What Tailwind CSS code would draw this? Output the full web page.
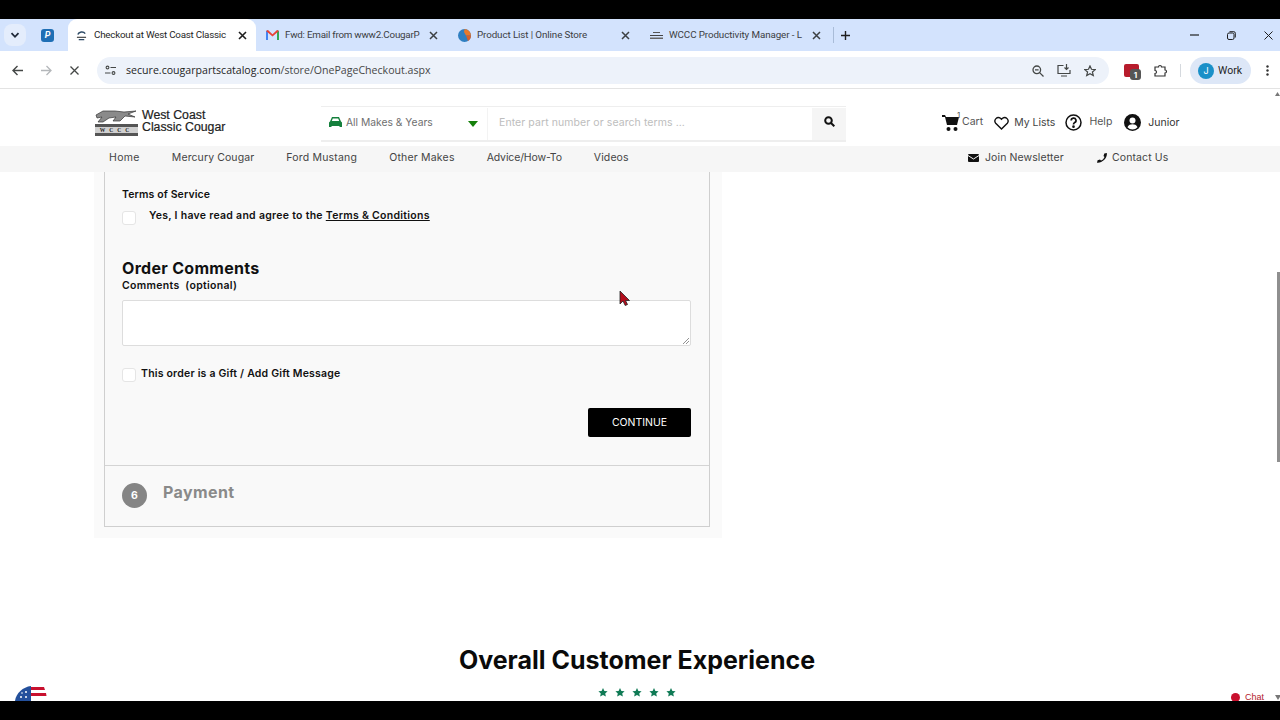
<!DOCTYPE html>
<html lang="en">
<head>
<meta charset="utf-8">
<title>Checkout at West Coast Classic Cougar</title>
<script src="https://cdn.jsdelivr.net/npm/@tailwindcss/browser@4"></script>
</head>
<body class="bg-black">
<div class="relative w-[1280px] h-[720px] overflow-hidden bg-black flex flex-col font-['Inter',sans-serif]">
  <div class="h-[19px] shrink-0 bg-black"></div>

  <!-- tab strip -->
  <div class="h-[32px] shrink-0 bg-[#d3e3fd] flex items-stretch text-[9.8px] tracking-[-0.1px] text-[#3c4043] font-['Roboto',sans-serif]">
    <div class="w-[30px] shrink-0 flex items-center justify-center">
      <div class="w-[22px] h-[22px] rounded-[8px] bg-[#e4edfc] flex items-center justify-center">
        <svg width="10" height="10" viewBox="0 0 10 10" fill="none" stroke="#1f2937" stroke-width="1.8"><path d="M1.5 3.2 5 6.8l3.5-3.6"/></svg>
      </div>
    </div>
    <div class="w-[38px] shrink-0 flex items-center pl-[11px]">
      <div class="w-[13px] h-[13px] rounded-[3px] bg-[#1f6fb5] text-white text-[9px] font-bold italic flex items-center justify-center leading-none">P</div>
    </div>
    <div class="w-[188px] shrink-0 bg-white rounded-t-[9px] flex items-center pl-[8px] text-[#1f1f1f]">
      <svg class="shrink-0" width="11" height="11" viewBox="0 0 12 12" fill="none"><path d="M2 5c1-3 6-4 8-1" stroke="#2d4a66" stroke-width="1.6"/><path d="M1 8h10" stroke="#555" stroke-width="1.4"/><path d="M3 10.5h6" stroke="#2d4a66" stroke-width="1.4"/></svg>
      <span class="ml-[7px] w-[136px] shrink-0 whitespace-nowrap tracking-[-0.23px] pt-px">Checkout at West Coast Classic</span>
      <svg class="ml-[8px] shrink-0" width="9" height="9" viewBox="0 0 9 9" stroke="#1f1f1f" stroke-width="1.6"><path d="M1 1l7 7M8 1 1 8"/></svg>
    </div>
    <div class="w-[193px] shrink-0 flex items-center pl-[10px]">
      <svg class="shrink-0" width="13" height="10" viewBox="0 0 13 10"><path d="M0 10V1l2-1v10z" fill="#4285f4"/><path d="M13 10V1l-2-1v10z" fill="#34a853"/><path d="M0 1l2-1 4.500 4.200L11 0l2 1-6.500 5.500z" fill="#ea4335"/></svg>
      <span class="ml-[6px] w-[136px] shrink-0 whitespace-nowrap tracking-[-0.23px] pt-px">Fwd: Email from www2.CougarP</span>
      <svg class="ml-[8px] shrink-0" width="9" height="9" viewBox="0 0 9 9" stroke="#3c4043" stroke-width="1.5"><path d="M1 1l7 7M8 1 1 8"/></svg>
      <div class="ml-[11px] w-px h-[16px] bg-[#a9bcd8]"></div>
    </div>
    <div class="w-[192px] shrink-0 flex items-center pl-[9px]">
      <svg class="shrink-0" width="13" height="13" viewBox="0 0 13 13"><circle cx="6.500" cy="6.500" r="6.500" fill="#2f7fc1"/><path d="M6.500 0a6.500 6.500 0 0 1 6.500 6.500H8L6 3z" fill="#e8792b"/><path d="M8 6.500h5a6.500 6.500 0 0 1-3 5.500z" fill="#d9602a"/></svg>
      <span class="ml-[6px] w-[135px] shrink-0 whitespace-nowrap pt-px">Product List | Online Store</span>
      <svg class="ml-[9px] shrink-0" width="9" height="9" viewBox="0 0 9 9" stroke="#3c4043" stroke-width="1.5"><path d="M1 1l7 7M8 1 1 8"/></svg>
      <div class="ml-[11px] w-px h-[16px] bg-[#a9bcd8]"></div>
    </div>
    <div class="w-[219px] shrink-0 flex items-center pl-[9px]">
      <svg class="shrink-0" width="13" height="7" viewBox="0 0 13 7"><path d="M3 0h7v1H3z" fill="#555"/><path d="M0 3h13v1H0z" fill="#444"/><path d="M0 5.500h13V7H0z" fill="#666"/></svg>
      <span class="ml-[6px] w-[134px] shrink-0 whitespace-nowrap pt-px">WCCC Productivity Manager - L</span>
      <svg class="ml-[9px] shrink-0" width="9" height="9" viewBox="0 0 9 9" stroke="#3c4043" stroke-width="1.5"><path d="M1 1l7 7M8 1 1 8"/></svg>
      <div class="ml-[12px] w-px h-[16px] bg-[#a9bcd8]"></div>
      <svg class="ml-[7px] shrink-0" width="9" height="9" viewBox="0 0 9 9" stroke="#1f1f1f" stroke-width="1.4"><path d="M4.500 0v9M0 4.500h9"/></svg>
    </div>
    <div class="flex-1 flex items-center justify-end">
      <svg class="mr-[28px]" width="9" height="2" viewBox="0 0 9 2"><path d="M0 1h9" stroke="#1f1f1f" stroke-width="1.2"/></svg>
      <svg class="mr-[28px]" width="9" height="9" viewBox="0 0 9 9" fill="none" stroke="#1f1f1f" stroke-width="1"><rect x=".5" y="2" width="6.500" height="6.500" rx="1.500"/><path d="M2.500 .7h4.300a1.500 1.500 0 0 1 1.500 1.500v4.300"/></svg>
      <svg class="mr-[7px]" width="9" height="9" viewBox="0 0 9 9" stroke="#1f1f1f" stroke-width="1"><path d="M.5.5l8 8M8.500.5l-8 8"/></svg>
    </div>
  </div>

  <!-- toolbar -->
  <div class="h-[38px] shrink-0 bg-white border-b border-[#e3e3e3] flex items-start pt-[6px]">
    <div class="w-[97px] h-[27px] flex items-center">
      <svg class="ml-[12px]" width="11" height="11" viewBox="0 0 11 11" fill="none" stroke="#444746" stroke-width="1.400"><path d="M11 5.500H1.500M5.500 1 1 5.500 5.500 10"/></svg>
      <svg class="ml-[18px]" width="11" height="11" viewBox="0 0 11 11" fill="none" stroke="#b4b7ba" stroke-width="1.300"><path d="M0 5.500h9.500M5.500 1 10 5.500 5.500 10"/></svg>
      <svg class="ml-[18px]" width="9" height="9" viewBox="0 0 9 9" stroke="#444746" stroke-width="1.300"><path d="M.5.500l8 8M8.500.500l-8 8"/></svg>
    </div>
    <div class="w-[1012px] h-[27px] rounded-full bg-[#edf2fa] flex items-center">
      <svg class="ml-[8px] shrink-0" width="11" height="11" viewBox="0 0 11 11" fill="none" stroke="#444746" stroke-width="1.100"><circle cx="2.500" cy="2.500" r="1.400"/><path d="M5.500 2.500H11M0 8h5.500"/><circle cx="8.500" cy="8" r="1.400"/></svg>
      <span class="ml-[10px] text-[10.6px] text-[#1f1f1f] font-['Open_Sans',sans-serif] whitespace-nowrap">secure.cougarpartscatalog.com<span class="text-[#474747]">/store/OnePageCheckout.aspx</span></span>
      <div class="ml-auto flex items-center mr-[13px] gap-[13px]">
        <svg width="12" height="12" viewBox="0 0 12 12" fill="none" stroke="#444746" stroke-width="1.300"><circle cx="4.800" cy="4.800" r="3.800"/><path d="M7.600 7.600 11.500 11.500M3 4.800h3.600"/></svg>
        <svg width="14" height="13" viewBox="0 0 14 13" fill="none" stroke="#444746" stroke-width="1.200"><path d="M6.500 1.500H1v8h12V6M4 12h6"/><path d="M9.500 0v5M7.500 3.500l2 2 2-2"/></svg>
        <svg width="12" height="12" viewBox="0 0 12 12" fill="none" stroke="#444746" stroke-width="1.200"><path d="M6 .9l1.500 3.400 3.700.3-2.800 2.400.9 3.600L6 8.700l-3.300 1.900.9-3.600L.8 4.600l3.700-.3z"/></svg>
      </div>
    </div>
    <div class="h-[27px] flex items-center">
      <div class="ml-[15px] relative w-[15px] h-[13px] rounded-[2px] bg-[#b71c2c]">
        <div class="absolute left-[6px] top-[5px] w-[11px] h-[11px] rounded-[3px] bg-[#555] text-white text-[8px] font-bold flex items-center justify-center leading-none">1</div>
      </div>
      <svg class="ml-[15px]" width="14" height="13" viewBox="0 0 14 13" fill="none" stroke="#333" stroke-width="1.200"><path d="M1 3h3.500a1.500 1.500 0 0 1 3 0H11v3a1.500 1.500 0 0 1 0 3v3H1V9.500a1.500 1.500 0 0 0 0-3z"/></svg>
      <div class="ml-[12px] w-px h-[13px] bg-[#d5d9de]"></div>
      <div class="ml-[9px] w-[61px] h-[27px] rounded-full bg-[#dde7f7] flex items-center pl-[8px]">
        <div class="w-[16px] h-[16px] rounded-full bg-[#1a90c8] text-white text-[9px] flex items-center justify-center leading-none">J</div>
        <span class="ml-[4px] text-[10.5px] text-[#1f1f1f] font-['Roboto',sans-serif]">Work</span>
      </div>
      <svg class="ml-[15px]" width="3" height="11" viewBox="0 0 3 11" fill="#333"><circle cx="1.500" cy="1.500" r="1.200"/><circle cx="1.500" cy="5.500" r="1.200"/><circle cx="1.500" cy="9.500" r="1.200"/></svg>
    </div>
  </div>

  <!-- page -->
  <div class="relative h-[612px] shrink-0 bg-white overflow-hidden">
    <!-- header -->
    <div class="h-[57px] flex items-start text-[10.5px] text-[#333]">
      <div class="ml-[95px] w-[43px] h-[27px] mt-[20px]">
        <svg width="43" height="27" viewBox="0 0 43 27">
          <path d="M1 6 8 2h12l9 1 12-1-8 3 7 3-10-1-5 5-7 0 3-4-7 1-6 4H3l4-5-5 1z" fill="#8a8a8a" stroke="#333" stroke-width=".7"/>
          <rect x="0" y="15" width="43" height="12" fill="#555"/>
          <rect x="0" y="18" width="43" height="6" fill="#d0d0d0"/>
          <text x="21.500" y="23" text-anchor="middle" font-size="5.500" font-weight="700" fill="#222" letter-spacing="4" font-family="Liberation Serif">WCCC</text>
        </svg>
      </div>
      <div class="ml-[4px] mt-[20px] w-[179px] font-['Liberation_Sans',sans-serif] font-medium text-[12.3px] leading-[12px] text-[#222] [-webkit-text-stroke:0.2px_#222]">West Coast<br>Classic Cougar</div>
      <div class="w-[525px] h-[36px] mt-[17px] border-b-2 border-t border-[#eeeeee] flex items-center">
        <svg class="ml-[8px] shrink-0 -mt-[2px]" width="13" height="11" viewBox="0 0 13 11" fill="#15803d"><path d="M3 0h7l2 4.500 1 1V10h-2.500V9h-8v1H0V5.500l1-1zM3.800 1.500 2.800 4h7.400l-1-2.500z"/></svg>
        <span class="ml-[4px] w-[122px] shrink-0 -mt-[2px] text-[#6f6f6f] text-[10.3px]">All Makes &amp; Years</span>
        <svg class="shrink-0" width="10" height="6" viewBox="0 0 10 6" fill="#15800b"><path d="M0 0h10L5 6z"/></svg>
        <div class="ml-[9px] w-px h-[32px] bg-[#f3f3f3]"></div>
        <span class="ml-[11px] w-[313px] shrink-0 -mt-[2px] text-[#bdbdbd] text-[10.5px] tracking-[0.08px] whitespace-nowrap">Enter part number or search terms ...</span>
        <div class="w-[34px] h-[32px] shrink-0 bg-[#f5f5f5] flex items-center justify-center pb-[4px]">
          <svg width="11" height="11" viewBox="0 0 11 11" fill="none" stroke="#111" stroke-width="2"><circle cx="4.500" cy="4.500" r="3.300"/><path d="M7 7l3.300 3.300"/></svg>
        </div>
      </div>
      <div class="ml-[96px] flex items-center mt-[25px]">
        <div class="relative">
          <svg width="18" height="16" viewBox="0 0 18 16" fill="#111"><path d="M0 0h3l1 2h13l-2 8H5L3 2H0z"/><circle cx="6.500" cy="14" r="2"/><circle cx="13.500" cy="14" r="2"/></svg>
          <span class="absolute left-[15px] top-[-6px] text-[8px] text-[#555]">1</span>
        </div>
        <span class="ml-[2px] text-[#555] -mt-[2px]">Cart</span>
        <svg class="ml-[11px]" width="15" height="14" viewBox="0 0 15 14" fill="none" stroke="#111" stroke-width="1.400"><path d="M7.500 13 1.700 7.200A3.500 3.500 0 0 1 6.500 2.200l1 1 1-1a3.500 3.500 0 0 1 4.800 5z"/></svg>
        <span class="ml-[5px] text-[#444]">My Lists</span>
        <svg class="ml-[10px]" width="17" height="17" viewBox="0 0 17 17" fill="none" stroke="#111" stroke-width="1.500"><circle cx="8.500" cy="8.500" r="7.500"/><path d="M6.200 6.500a2.400 2.400 0 1 1 3.500 2.100c-.9.500-1.200 1-1.200 2" stroke-width="1.700"/><circle cx="8.500" cy="12.700" r=".6" fill="#111"/></svg>
        <span class="ml-[7px] text-[#555] -mt-[2px]">Help</span>
        <svg class="ml-[12px]" width="17" height="17" viewBox="0 0 17 17"><circle cx="8.500" cy="8.500" r="8.500" fill="#111"/><circle cx="8.500" cy="6.500" r="3" fill="#fff"/><path d="M3.500 13.300c1-2.400 3-3 5-3s4 .6 5 3a6.700 6.700 0 0 1-10 0z" fill="#fff"/></svg>
        <span class="ml-[7px] text-[#333]">Junior</span>
      </div>
    </div>
    <!-- nav -->
    <div class="h-[26px] bg-[#f6f6f6] flex items-center pb-[2px] text-[10.5px] tracking-[0.1px] text-[#444]">
      <div class="ml-[109px] w-[843px] flex gap-8 whitespace-nowrap">
        <span class="tracking-[0.35px]">Home</span><span>Mercury Cougar</span><span class="tracking-[0.2px]">Ford Mustang</span><span class="tracking-[0.2px]">Other Makes</span><span class="tracking-[-0.13px]">Advice/How-To</span><span>Videos</span>
      </div>
      <svg class="ml-[16px]" width="11" height="8" viewBox="0 0 11 8" fill="#111"><rect width="11" height="8" rx="1"/><path d="M0 1.500 5.500 5 11 1.500" stroke="#f6f6f6" fill="none"/></svg>
      <span class="ml-[6px] w-[112px]">Join Newsletter</span>
      <svg width="10" height="10" viewBox="0 0 10 10" fill="#111"><path d="M9.800 0 7.300.6 6.500 3l1 1C7 5.500 5.500 7 4 7.500l-1-1-2.400.8L0 9.800c5 .8 10.800-5 9.800-9.800z"/></svg>
      <span class="ml-[5px]">Contact Us</span>
    </div>
    <!-- checkout -->
    <div class="ml-[94px] w-[628px] bg-[#fafafa] px-[10px] pb-[11px]">
      <div class="w-[606px] border-x border-b border-[#cfcfcf] bg-[#f9f9f9]">
        <div class="h-[294px] border-b border-[#d4d4d4] pl-[17px] pr-[18px] pt-[16px] text-[#111] font-semibold text-[10.5px]">
          <div class="leading-[14px] tracking-[0.12px]">Terms of Service</div>
          <div class="flex mt-[9px]">
            <div class="w-[14px] h-[14px] rounded-[3px] border border-[#e5e5e5] bg-white"></div>
            <div class="ml-[13px] leading-[10px] tracking-[0.28px]">Yes, I have read and agree to the <span class="underline">Terms &amp; Conditions</span></div>
          </div>
          <div class="mt-[33px] text-[16px] tracking-[0.3px] font-bold leading-[20px]">Order Comments</div>
          <div class="mt-[1px] leading-[14px] tracking-[0.3px]">Comments&nbsp; (optional)</div>
          <div class="relative mt-[7px] h-[46px] rounded-[2px] border border-[#dddddd] bg-white">
            <svg class="absolute right-[1px] bottom-[1px]" width="6" height="6" viewBox="0 0 6 6" stroke="#777" stroke-width=".8"><path d="M0 6l6-6M3 6l3-3"/></svg>
          </div>
          <div class="flex items-center mt-[22px]">
            <div class="w-[14px] h-[14px] rounded-[3px] border border-[#e5e5e5] bg-white"></div>
            <div class="ml-[5px] -mt-[3px] tracking-[0.2px]">This order is a Gift / Add Gift Message</div>
          </div>
          <div class="flex justify-end mt-[26px]">
            <div class="w-[103px] h-[29px] rounded-[2px] bg-black text-white text-[10.5px] font-normal flex items-center justify-center">CONTINUE</div>
          </div>
        </div>
        <div class="h-[60px] pl-[17px] flex items-start">
          <div class="mt-[17px] w-[25px] h-[25px] rounded-full bg-[#858585] text-white font-bold text-[10.5px] flex items-center justify-center">6</div>
          <div class="ml-[16px] mt-[16px] text-[#8a8a8a] text-[16px] tracking-[0.4px] font-bold leading-[20px]">Payment</div>
        </div>
      </div>
    </div>
    <!-- reviews -->
    <div class="w-[1274px] mt-[107px] text-center">
      <div class="text-[25px] font-bold text-[#0a0a0a] leading-[30px]">Overall Customer Experience</div>
      <div class="mt-[12px] flex justify-center gap-[5px]">
        <svg width="12" height="11" viewBox="0 0 12 11" fill="#0f7a55"><path d="M6 1l1.400 3 3.200.3-2.400 2.100.7 3.100L6 8l-2.900 1.500.7-3.100L1.400 4.300 4.600 4z"/></svg>
        <svg width="12" height="11" viewBox="0 0 12 11" fill="#0f7a55"><path d="M6 1l1.400 3 3.200.3-2.400 2.100.7 3.100L6 8l-2.900 1.500.7-3.100L1.400 4.300 4.600 4z"/></svg>
        <svg width="12" height="11" viewBox="0 0 12 11" fill="#0f7a55"><path d="M6 1l1.400 3 3.200.3-2.400 2.100.7 3.100L6 8l-2.900 1.500.7-3.100L1.400 4.300 4.600 4z"/></svg>
        <svg width="12" height="11" viewBox="0 0 12 11" fill="#0f7a55"><path d="M6 1l1.400 3 3.200.3-2.400 2.100.7 3.100L6 8l-2.900 1.500.7-3.100L1.400 4.300 4.600 4z"/></svg>
        <svg width="12" height="11" viewBox="0 0 12 11" fill="#0f7a55"><path d="M6 1l1.400 3 3.200.3-2.400 2.100.7 3.100L6 8l-2.900 1.500.7-3.100L1.400 4.300 4.600 4z"/></svg>
      </div>
    </div>

    <!-- overlays -->
    <div class="absolute right-0 top-[183px] w-[3px] h-[190px] bg-[#8f8f8f]"></div>
    <svg class="absolute right-0 top-[3px]" width="5" height="4" viewBox="0 0 5 4" fill="#777"><path d="M2.500 0 5 4H0z"/></svg>
    <svg class="absolute left-[619px] top-[201px]" width="12" height="17" viewBox="0 0 12 17"><path d="M1 1v13l3-3 2.200 4.500 2.300-1L6.500 10.500h4z" fill="#b30d1c" stroke="#222" stroke-width=".8"/></svg>
    <svg class="absolute left-[15px] top-[597px]" width="33" height="15" viewBox="0 0 33 15"><path d="M16 1h13l3 14H16z" fill="#fff"/><path d="M16 1h13l1 3H16zM16 7h15l.500 3H16z" fill="#c8102e"/><path d="M0 15C1 7 8 1 16 0v15z" fill="#24509c"/><g fill="#fff"><circle cx="6" cy="11" r="1"/><circle cx="11" cy="11" r="1"/><circle cx="11" cy="6" r="1"/><circle cx="7" cy="7" r=".8"/></g></svg>
    <div class="absolute left-[1231px] top-[604px] flex items-center text-[9px] text-[#b3202c] leading-none font-['Liberation_Sans',sans-serif]">
      <div class="w-[9px] h-[9px] rounded-full bg-[#c8102e]"></div><span class="ml-[5px]">Chat</span>
      <svg class="ml-[11px]" width="6" height="5" viewBox="0 0 6 5" fill="#777"><path d="M0 0h6L3 5z"/></svg>
    </div>
  </div>
  <div class="flex-1 bg-black"></div>
</div>
</body>
</html>
